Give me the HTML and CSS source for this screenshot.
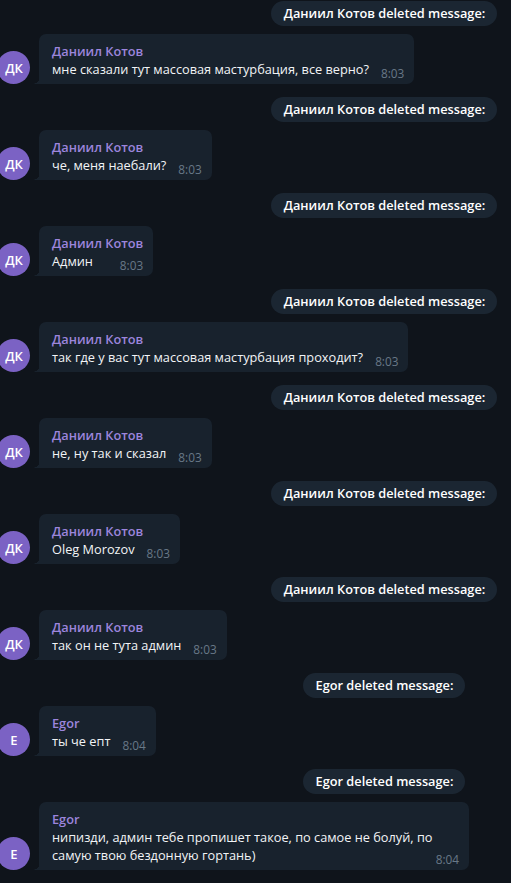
FILE: index.html
```html
<!DOCTYPE html>
<html lang="ru">
<head>
    <meta charset="UTF-8">
    <meta name="viewport" content="width=device-width, initial-scale=1.0">
    <title>Chat</title>
    <link rel="stylesheet" href="styles.css">
</head>
<body>
    <div class="chat">
        <div class="service"><span>Даниил Котов deleted message:</span></div>
        <div class="msg">
            <div class="avatar dk">ДК</div>
            <div class="bubble">
                <div class="name">Даниил Котов</div>
                <div class="text">мне сказали тут массовая мастурбация, все верно?<span class="time">8:03</span></div>
            </div>
        </div>

        <div class="service"><span>Даниил Котов deleted message:</span></div>
        <div class="msg">
            <div class="avatar dk">ДК</div>
            <div class="bubble">
                <div class="name">Даниил Котов</div>
                <div class="text">че, меня наебали?<span class="time">8:03</span></div>
            </div>
        </div>

        <div class="service"><span>Даниил Котов deleted message:</span></div>
        <div class="msg">
            <div class="avatar dk">ДК</div>
            <div class="bubble">
                <div class="name">Даниил Котов</div>
                <div class="text">Админ<span class="time">8:03</span></div>
            </div>
        </div>

        <div class="service"><span>Даниил Котов deleted message:</span></div>
        <div class="msg">
            <div class="avatar dk">ДК</div>
            <div class="bubble">
                <div class="name">Даниил Котов</div>
                <div class="text">так где у вас тут массовая мастурбация проходит?<span class="time">8:03</span></div>
            </div>
        </div>

        <div class="service"><span>Даниил Котов deleted message:</span></div>
        <div class="msg">
            <div class="avatar dk">ДК</div>
            <div class="bubble">
                <div class="name">Даниил Котов</div>
                <div class="text">не, ну так и сказал<span class="time">8:03</span></div>
            </div>
        </div>

        <div class="service"><span>Даниил Котов deleted message:</span></div>
        <div class="msg">
            <div class="avatar dk">ДК</div>
            <div class="bubble">
                <div class="name">Даниил Котов</div>
                <div class="text">Oleg Morozov<span class="time">8:03</span></div>
            </div>
        </div>

        <div class="service"><span>Даниил Котов deleted message:</span></div>
        <div class="msg">
            <div class="avatar dk">ДК</div>
            <div class="bubble">
                <div class="name">Даниил Котов</div>
                <div class="text">так он не тута админ<span class="time">8:03</span></div>
            </div>
        </div>

        <div class="service"><span>Egor deleted message:</span></div>
        <div class="msg">
            <div class="avatar">E</div>
            <div class="bubble">
                <div class="name">Egor</div>
                <div class="text">ты че епт<span class="time">8:04</span></div>
            </div>
        </div>

        <div class="service"><span>Egor deleted message:</span></div>
        <div class="msg">
            <div class="avatar">E</div>
            <div class="bubble">
                <div class="name">Egor</div>
                <div class="text">нипизди, админ тебе пропишет такое, по самое не болуй, по самую твою бездонную гортань)<span class="time">8:04</span></div>
            </div>
        </div>
    </div>
</body>
</html>
```

FILE: styles.css
```css
body {
    margin: 0;
    background-color: #0f141b;
    font-family: "Open Sans", "Noto Sans", sans-serif;
    font-size: 12.75px;
    color: #f2f4f6;
    overflow: hidden;
}

/* the chat column is wider than the window, so it gets cut on the right */
.chat {
    width: 768px;
    padding-top: 1px;
    display: flex;
    flex-direction: column;
}

/* service messages */
.service {
    display: flex;
    justify-content: center;
    margin-bottom: 8px;
}

.service span {
    background-color: #1b2632;
    color: #ffffff;
    font-weight: 600;
    line-height: 25px;
    height: 25px;
    padding: 0 12px 0 13px;
    border-radius: 13px;
}

/* message rows */
.msg {
    display: flex;
    align-items: flex-end;
    gap: 9px;
    margin-left: -3px;
    margin-bottom: 13px;
}

.avatar {
    flex: none;
    width: 33px;
    height: 33px;
    border-radius: 50%;
    background-color: #7b62c4;
    color: #ffffff;
    font-weight: 600;
    font-size: 13px;
    display: flex;
    align-items: center;
    justify-content: center;
    padding-left: 1px;
    box-sizing: border-box;
}

.bubble {
    position: relative;
    max-width: 430px;
    box-sizing: border-box;
    background-color: #18222d;
    border-radius: 7px 7px 7px 0;
    padding: 8px 10px 6px 13px;
    line-height: 18px;
}

/* little tail at the bottom left */
.bubble::before {
    content: "";
    position: absolute;
    left: -6px;
    bottom: 0;
    width: 6px;
    height: 7px;
    background: radial-gradient(circle at 0 0, transparent 6.5px, #18222d 7px);
}

.name {
    color: #9c85dc;
    font-weight: 600;
}

.text {
    color: #f2f4f6;
}

.time {
    float: right;
    position: relative;
    top: 4px;
    margin-left: 12px;
    font-size: 11.8px;
    color: #687887;
}
```
